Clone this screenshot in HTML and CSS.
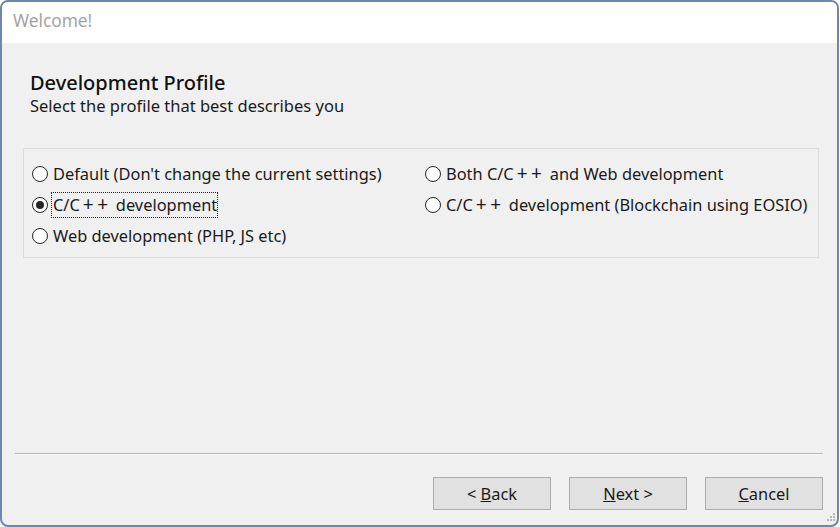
FILE: index.html
```html
<!DOCTYPE html>
<html>
<head>
<meta charset="utf-8">
<link rel="stylesheet" href="styles.css">
</head>
<body>
<div class="window">
  <div class="titlebar">Welcome!</div>
  <div class="content">
    <div class="header">
      <div class="heading">Development Profile</div>
      <div class="subheading">Select the profile that best describes you</div>
    </div>
    <div class="group">
      <div class="col col1">
        <label class="radio"><span class="circle"></span><span class="label">Default (Don't change the current settings)</span></label>
        <label class="radio checked"><span class="circle"></span><span class="label focus">C/C<span class="pp">++</span>development</span></label>
        <label class="radio"><span class="circle"></span><span class="label">Web development (PHP, JS etc)</span></label>
      </div>
      <div class="col col2">
        <label class="radio"><span class="circle"></span><span class="label">Both C/C<span class="pp">++</span>and Web development</span></label>
        <label class="radio"><span class="circle"></span><span class="label">C/C<span class="pp">++</span>development (Blockchain using EOSIO)</span></label>
      </div>
    </div>
    <div class="spacer"></div>
    <div class="separator"></div>
    <div class="buttons">
      <button class="btn">&lt; <u>B</u>ack</button>
      <button class="btn"><u>N</u>ext &gt;</button>
      <button class="btn"><u>C</u>ancel</button>
    </div>
    <div class="grip">
      <svg width="8" height="9" viewBox="0 0 8 9"><g fill="#b8b8b8"><rect x="6" y="0" width="2" height="2"/><rect x="3" y="3" width="2" height="2"/><rect x="6" y="3" width="2" height="2"/><rect x="0" y="6" width="2" height="2"/><rect x="3" y="6" width="2" height="2"/><rect x="6" y="6" width="2" height="2"/></g></svg>
    </div>
  </div>
</div>
</body>
</html>
```

FILE: styles.css
```css
* { box-sizing: border-box; }
html, body {
  margin: 0;
  padding: 0;
  background: #ffffff;
  width: 840px;
  height: 527px;
  overflow: hidden;
}
body {
  font-family: "Noto Sans", "Open Sans", sans-serif;
  font-size: 16px;
  color: #1a1a1a;
}
.window {
  width: 839px;
  height: 527px;
  border: 2px solid #6f87a8;
  border-radius: 8px;
  display: flex;
  flex-direction: column;
  overflow: hidden;
  background: #f0f0f0;
}
.titlebar {
  height: 41px;
  flex: none;
  background: #ffffff;
  color: #a3a3a3;
  font-size: 17.3px;
  padding: 7px 0 0 11px;
}
.content {
  flex: 1;
  display: flex;
  flex-direction: column;
  position: relative;
}
.header {
  padding: 27px 0 0 28px;
}
.heading {
  font-size: 20px;
  font-weight: 500;
  color: #111;
  line-height: 25px;
}
.subheading {
  font-size: 16.5px;
  line-height: 22px;
  color: #1a1a1a;
}
.group {
  margin: 31px 0 0 21px;
  width: 796px;
  height: 110px;
  border: 1px solid #dcdcdc;
  display: flex;
  padding: 9px 0 0 8px;
}
.col { display: flex; flex-direction: column; }
.col1 { width: 393px; }
.radio {
  display: flex;
  align-items: center;
  height: 31px;
  font-size: 16.4px;
}
.circle {
  width: 16px;
  height: 16px;
  border: 1.3px solid #262626;
  border-radius: 50%;
  background: #fff;
  flex: none;
  margin-right: 5px;
  display: flex;
  align-items: center;
  justify-content: center;
}
.checked .circle::after {
  content: "";
  width: 8px;
  height: 8px;
  border-radius: 50%;
  background: #262626;
}
.label { padding: 1px 0; white-space: nowrap; line-height: 22px; }
.pp { margin-left: 3px; font-size: 19px; line-height: 1; letter-spacing: 3.5px; }
.pp::after { content: " "; letter-spacing: 0; font-size: 16.4px; }
.focus { outline: 1px dotted #222; outline-offset: 0px; margin-left: -1px; padding-left: 1px; }
.spacer { flex: 1; }
.separator {
  margin: 0 14px 0 13px;
  height: 2px;
  border-top: 1px solid #b5b5b5;
  border-bottom: 1px solid #ffffff;
}
.buttons {
  display: flex;
  justify-content: flex-end;
  gap: 18px;
  padding: 22px 14px 15px 0;
}
.btn {
  width: 118px;
  height: 33px;
  background: #e1e1e1;
  border: 1px solid #adadad;
  font-family: "Noto Sans", "Open Sans", sans-serif;
  font-size: 16.4px;
  color: #1a1a1a;
  padding: 0;
}
.grip {
  position: absolute;
  right: 2px;
  bottom: 3px;
  line-height: 0;
}
```
